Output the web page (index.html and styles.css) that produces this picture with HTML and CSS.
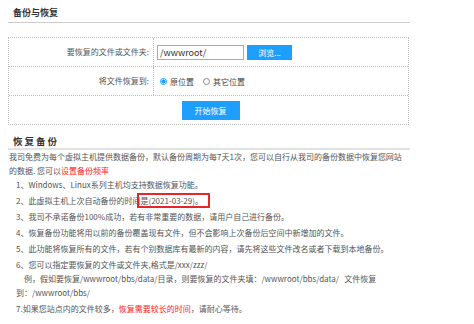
FILE: index.html
```html
<!DOCTYPE html>
<html lang="zh-CN">
<head>
    <meta charset="UTF-8">
    <title>备份与恢复</title>
    <link rel="stylesheet" href="styles.css">
</head>
<body>
    <div class="page">
        <h2 class="title">备份与恢复</h2>
        <div class="form">
            <div class="row">
                <div class="label">要恢复的文件或文件夹:</div>
                <div class="value">
                    <input class="path" type="text" value="/wwwroot/">
                    <button class="btn small">浏览...</button>
                </div>
            </div>
            <div class="row">
                <div class="label">将文件恢复到:</div>
                <div class="value">
                    <label class="opt"><input class="radio" type="radio" name="to" checked>原位置</label>
                    <label class="opt"><input class="radio" type="radio" name="to">其它位置</label>
                </div>
            </div>
            <div class="row last">
                <button class="btn big">开始恢复</button>
            </div>
        </div>

        <h3 class="sec-title">恢复备份</h3>
        <p class="intro">我司免费为每个虚拟主机提供数据备份，默认备份周期为每7天1次，您可以自行从我司的备份数据中恢复您网站<br>的数据. 您可以<a class="red" href="#">设置备份频率</a></p>
        <ul class="notes">
            <li>1、Windows、Linux系列主机均支持数据恢复功能。</li>
            <li>2、此虚拟主机上次自动备份的时间<span class="mark">是(2021-03-29)。</span></li>
            <li>3、我司不承诺备份100%成功，若有非常重要的数据，请用户自己进行备份。</li>
            <li>4、恢复备份功能将用以前的备份覆盖现有文件，但不会影响上次备份后空间中新增加的文件。</li>
            <li>5、此功能将恢复所有的文件，若有个别数据库有最新的内容，请先将这些文件改名或者下载到本地备份。</li>
            <li>6、您可以指定要恢复的文件或文件夹,格式是/xxx/zzz/<br><span class="indent">例，假如要恢复/wwwroot/bbs/data/目录，则要恢复的文件夹填：/wwwroot/bbs/data/&nbsp;&nbsp;&nbsp;文件恢复</span><br>到：/wwwroot/bbs/</li>
            <li>7.如果您站点内的文件较多，<span class="red">恢复需要较长的时间</span>，请耐心等待。</li>
        </ul>
    </div>
</body>
</html>
```

FILE: styles.css
```css
*{
    margin: 0;
    padding: 0;
    box-sizing: border-box;
}
body{
    background: #fff;
    font-family: "Noto Sans CJK SC", "Noto Sans", sans-serif;
    font-size: 8px;
    color: #555;
}
.page{
    width: 418px;
    padding: 0 8px;
}
.title{
    font-size: 9px;
    line-height: 14px;
    padding: 6px 0 2px 5px;
    color: #333;
    border-bottom: 1px solid #ccc;
}
.form{
    margin-top: 14px;
    border: 1px dotted #bbb;
    margin-right: 1px;
}
.row{
    display: flex;
    align-items: center;
    height: 29px;
    border-bottom: 1px dotted #bbb;
}
.row.last{
    height: 28px;
    border-bottom: none;
    justify-content: center;
}
.label{
    width: 145px;
    height: 100%;
    border-right: 1px dotted #bbb;
    text-align: right;
    padding-right: 4px;
    line-height: 28px;
    color: #555;
}
.value{
    display: flex;
    align-items: center;
    padding-left: 3px;
}
.path{
    width: 87px;
    height: 15px;
    border: 1px solid #aaa;
    font-family: inherit;
    font-size: 9px;
    color: #333;
    padding-left: 2px;
    outline: none;
}
.btn{
    border: none;
    background: #1e9fff;
    color: #fff;
    font-family: inherit;
    font-size: 8px;
}
.btn.small{
    width: 45px;
    height: 15px;
    margin-left: 3px;
}
.btn.big{
    width: 58px;
    height: 19px;
    margin-left: 4px;
}
.opt{
    display: flex;
    align-items: center;
    margin-left: 3px;
    margin-right: 6px;
    color: #444;
}
.radio{
    appearance: none;
    width: 7px;
    height: 7px;
    border: 1px solid #888;
    border-radius: 50%;
    margin-right: 3px;
}
.radio:checked{
    border-color: #1e9fff;
    background: radial-gradient(circle, #1e9fff 55%, #fff 60%);
}
.sec-title{
    margin-top: 10px;
    font-size: 9.5px;
    line-height: 12px;
    letter-spacing: 2px;
    padding: 0 0 1px 5px;
    color: #333;
    border-bottom: 2px solid #e2e2e2;
}
.intro{
    line-height: 14px;
    padding-left: 1px;
    color: #555;
}
.red{
    color: #f22;
    text-decoration: none;
}
.notes{
    list-style: none;
    padding-left: 8px;
}
.notes li{
    line-height: 14px;
    margin-bottom: 2px;
}
.indent{
    padding-left: 8px;
    white-space: nowrap;
}
.mark{
    position: relative;
}
.mark::after{
    content: "";
    position: absolute;
    left: -3px;
    right: -7px;
    top: -2px;
    bottom: -2px;
    border: 2px solid #e5262b;
}
```
